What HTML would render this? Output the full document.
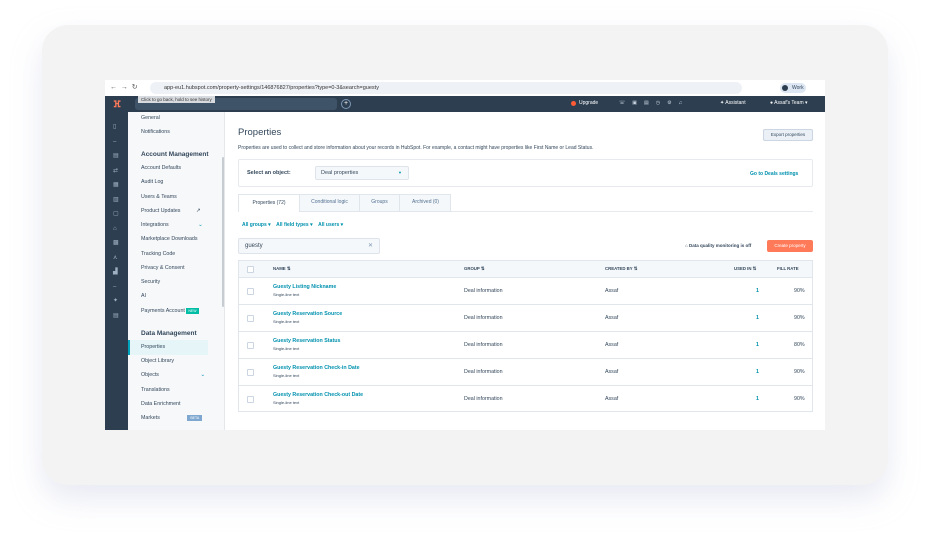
<!DOCTYPE html>
<html><head><meta charset="utf-8"><style>
*{box-sizing:border-box;margin:0;padding:0}
body{width:930px;height:544px;background:#fff;font-family:"Liberation Sans",sans-serif;position:relative;overflow:hidden;color:#33475b}
.abs{position:absolute}
.card{left:42px;top:25px;width:846px;height:460px;background:#f3f3f3;border-radius:26px;box-shadow:0 14px 30px rgba(190,195,220,.35)}
.win{left:105px;top:80px;width:720px;height:350px;background:#fff;overflow:hidden}
.chrome{left:0;top:0;width:720px;height:16px;background:#fff}
.url{left:45px;top:2px;width:592px;height:12px;background:#eef1f6;border-radius:6px;font-size:5.5px;line-height:12px;padding-left:14px;color:#333}
.nav{left:0;top:16px;width:720px;height:16px;background:#2d3e50}
.rail{left:0;top:32px;width:23px;height:318px;background:#2d3e50}
.side{left:23px;top:32px;width:97px;height:318px;background:#f6f8fa;border-right:1px solid #e5e8eb}
.side div{position:absolute;left:13px;font-size:5.3px;color:#33475b}
.side .h{font-size:6.5px;font-weight:bold}
.main{left:120px;top:32px;width:600px;height:318px;background:#fff}
.t{font-size:5px}
.link{color:#0091ae;font-weight:bold}
.row{position:absolute;left:133px;width:575px;height:27px;border-top:1px solid #e0e6ec;font-size:5.3px}
.cb{position:absolute;left:9px;top:10px;width:7px;height:7px;border:1px solid #cbd6e2;border-radius:1px;background:#fff}
</style></head><body>
<div class="abs card"></div>
<div class="abs win">
 <div class="abs chrome"></div>
 <div class="abs" style="left:5px;top:3px;font-size:7px;color:#555">←&nbsp;&nbsp;→&nbsp;&nbsp;↻</div>
 <div class="abs url">app-eu1.hubspot.com/property-settings/146876827/properties?type=0-3&amp;search=guesty</div>
 <div class="abs" style="left:675px;top:3px;width:26px;height:10px;background:#dde6f3;border-radius:5px;font-size:5px;line-height:10px;padding-left:12px">Work</div>
 <div class="abs" style="left:677px;top:5px;width:6px;height:6px;background:#2d3e50;border-radius:3px"></div>
 <div class="abs nav"></div>
 <div class="abs" style="left:8px;top:19px;color:#ff7a59;font-size:9px;font-weight:bold">ⴼ</div>
 <div class="abs" style="left:30px;top:18px;width:202px;height:12px;background:#3e5368;border-radius:3px"></div>
 <div class="abs" style="left:33px;top:16px;background:#d7dbdf;font-size:4.5px;padding:1px 3px;color:#333">Click to go back, hold to see history</div>
 <div class="abs" style="left:236px;top:19px;width:10px;height:10px;border:1px solid #7c98b6;border-radius:5px;color:#fff;font-size:7px;line-height:8px;text-align:center">+</div>
 <div class="abs" style="left:466px;top:21px;width:5px;height:5px;background:#ff5c35;border-radius:3px"></div>
 <div class="abs" style="left:474px;top:20px;color:#fff;font-size:5px">Upgrade</div>
 <div class="abs" style="left:514px;top:20px;color:#cbd6e2;font-size:5px;letter-spacing:7px">☏▣▤◷⚙♫</div>
 <div class="abs" style="left:615px;top:20px;color:#fff;font-size:5px">✦ Assistant</div>
 <div class="abs" style="left:665px;top:20px;color:#fff;font-size:5px">● Assaf's Team ▾</div>
 <div class="abs rail"></div>
 <div class="abs" style="left:8px;top:40px;width:7px;height:300px;color:#9fb0c2;font-size:6px;line-height:14.5px">▯<br>–<br>▤<br>⇄<br>▦<br>▥<br>▢<br>⌂<br>▩<br>⋏<br>▟<br>–<br>✦<br>▤</div>
 <div class="abs side">
  <div style="top:3px">General</div>
  <div style="top:17px">Notifications</div>
  <div class="h" style="top:39px">Account Management</div>
  <div style="top:53px">Account Defaults</div>
  <div style="top:67px">Audit Log</div>
  <div style="top:82px">Users &amp; Teams</div>
  <div style="top:96px">Product Updates <span style="margin-left:14px">↗</span></div>
  <div style="top:110px">Integrations <span style="margin-left:28px;color:#0091ae">⌄</span></div>
  <div style="top:124px">Marketplace Downloads</div>
  <div style="top:139px">Tracking Code</div>
  <div style="top:153px">Privacy &amp; Consent</div>
  <div style="top:167px">Security</div>
  <div style="top:181px">AI</div>
  <div style="top:196px">Payments Account <span style="background:#00bda5;color:#fff;font-size:3.5px;padding:1px 2px">NEW</span></div>
  <div class="h" style="top:218px">Data Management</div>
  <div style="top:228px;left:0;width:80px;height:15px;background:#e5f5f8;border-left:2px solid #00a4bd"></div>
  <div style="top:232px">Properties</div>
  <div style="top:246px">Object Library</div>
  <div style="top:260px">Objects <span style="margin-left:40px;color:#0091ae">⌄</span></div>
  <div style="top:275px">Translations</div>
  <div style="top:289px">Data Enrichment</div>
  <div style="top:303px">Markets <span style="margin-left:26px;background:#7fa8d0;color:#fff;font-size:3.5px;padding:1px 3px">BETA</span></div>
  <div style="left:94px;top:45px;width:2px;height:150px;background:#c6ccd2;border-radius:1px"></div>
 </div>
 <div class="abs main"></div>
 <div class="abs" style="left:133px;top:47px;font-size:9.5px">Properties</div>
 <div class="abs" style="left:658px;top:49px;width:50px;height:12px;background:#eaf0f6;border:1px solid #cbd6e2;border-radius:2px;font-size:4.5px;line-height:10px;text-align:center">Export properties</div>
 <div class="abs t" style="left:133px;top:65px">Properties are used to collect and store information about your records in HubSpot. For example, a contact might have properties like First Name or Lead Status.</div>
 <div class="abs" style="left:133px;top:79px;width:575px;height:28px;border:1px solid #e6eaee;border-radius:2px"></div>
 <div class="abs" style="left:142px;top:90px;font-size:5.5px;font-weight:bold">Select an object:</div>
 <div class="abs" style="left:210px;top:86px;width:94px;height:14px;background:#f5f8fa;border:1px solid #dfe3eb;border-radius:2px;font-size:5.5px;line-height:12px;padding-left:5px">Deal properties<span style="position:absolute;right:6px;color:#0091ae;font-size:4px">▼</span></div>
 <div class="abs t link" style="left:645px;top:91px">Go to Deals settings</div>
 <div class="abs" style="left:133px;top:131px;width:575px;height:1px;background:#e6eaee"></div>
 <div class="abs" style="left:133px;top:114px;width:213px;height:18px;background:#f5f8fa;border:1px solid #e0e6ec"></div>
 <div class="abs" style="left:133px;top:114px;width:62px;height:18px;background:#fff;border:1px solid #e0e6ec;border-bottom:none;font-size:5px;line-height:17px;text-align:center">Properties (72)</div>
 <div class="abs" style="left:195px;top:114px;width:60px;height:18px;border-right:1px solid #e0e6ec;font-size:5px;line-height:17px;text-align:center;color:#516f90">Conditional logic</div>
 <div class="abs" style="left:255px;top:114px;width:40px;height:18px;border-right:1px solid #e0e6ec;font-size:5px;line-height:17px;text-align:center;color:#516f90">Groups</div>
 <div class="abs" style="left:295px;top:114px;width:51px;height:18px;font-size:5px;line-height:17px;text-align:center;color:#516f90">Archived (0)</div>
 <div class="abs t link" style="left:137px;top:142px">All groups ▾&nbsp;&nbsp;&nbsp;&nbsp;All field types ▾&nbsp;&nbsp;&nbsp;&nbsp;All users ▾</div>
 <div class="abs" style="left:133px;top:158px;width:142px;height:16px;background:#f5f8fa;border:1px solid #dfe3eb;border-radius:2px;font-size:6px;line-height:14px;padding-left:6px">guesty<span style="position:absolute;right:6px;color:#7c98b6">✕</span></div>
 <div class="abs" style="left:580px;top:163px;font-size:4.5px;font-weight:bold">⌂ Data quality monitoring is off</div>
 <div class="abs" style="left:662px;top:160px;width:46px;height:12px;background:#ff7a59;border-radius:2px;color:#fff;font-size:4.5px;line-height:12px;text-align:center">Create property</div>
 <div class="row" style="top:180px;height:17px;background:#f5f8fa;font-size:4.3px;font-weight:bold;line-height:16px">
  <div class="cb" style="top:5px"></div>
  <span class="abs" style="left:35px">NAME ⇅</span><span class="abs" style="left:226px">GROUP ⇅</span><span class="abs" style="left:367px">CREATED BY ⇅</span><span class="abs" style="left:496px">USED IN ⇅</span><span class="abs" style="left:539px">FILL RATE</span>
 </div>
 <div class="abs" style="left:133px;top:180px;width:575px;height:152px;border:1px solid #e0e6ec"></div>
 <div class="row" style="top:197px"><div class="cb"></div><span class="abs link" style="left:35px;top:6px">Guesty Listing Nickname</span><span class="abs" style="left:35px;top:14px;font-size:4px">Single-line text</span><span class="abs" style="left:226px;top:10px">Deal information</span><span class="abs" style="left:367px;top:10px">Assaf</span><span class="abs link" style="left:518px;top:10px">1</span><span class="abs" style="left:556px;top:10px">90%</span></div>
 <div class="row" style="top:224px"><div class="cb"></div><span class="abs link" style="left:35px;top:6px">Guesty Reservation Source</span><span class="abs" style="left:35px;top:14px;font-size:4px">Single-line text</span><span class="abs" style="left:226px;top:10px">Deal information</span><span class="abs" style="left:367px;top:10px">Assaf</span><span class="abs link" style="left:518px;top:10px">1</span><span class="abs" style="left:556px;top:10px">90%</span></div>
 <div class="row" style="top:251px"><div class="cb"></div><span class="abs link" style="left:35px;top:6px">Guesty Reservation Status</span><span class="abs" style="left:35px;top:14px;font-size:4px">Single-line text</span><span class="abs" style="left:226px;top:10px">Deal information</span><span class="abs" style="left:367px;top:10px">Assaf</span><span class="abs link" style="left:518px;top:10px">1</span><span class="abs" style="left:556px;top:10px">80%</span></div>
 <div class="row" style="top:278px"><div class="cb"></div><span class="abs link" style="left:35px;top:6px">Guesty Reservation Check-in Date</span><span class="abs" style="left:35px;top:14px;font-size:4px">Single-line text</span><span class="abs" style="left:226px;top:10px">Deal information</span><span class="abs" style="left:367px;top:10px">Assaf</span><span class="abs link" style="left:518px;top:10px">1</span><span class="abs" style="left:556px;top:10px">90%</span></div>
 <div class="row" style="top:305px"><div class="cb"></div><span class="abs link" style="left:35px;top:6px">Guesty Reservation Check-out Date</span><span class="abs" style="left:35px;top:14px;font-size:4px">Single-line text</span><span class="abs" style="left:226px;top:10px">Deal information</span><span class="abs" style="left:367px;top:10px">Assaf</span><span class="abs link" style="left:518px;top:10px">1</span><span class="abs" style="left:556px;top:10px">90%</span></div>
</div>
</body></html>
